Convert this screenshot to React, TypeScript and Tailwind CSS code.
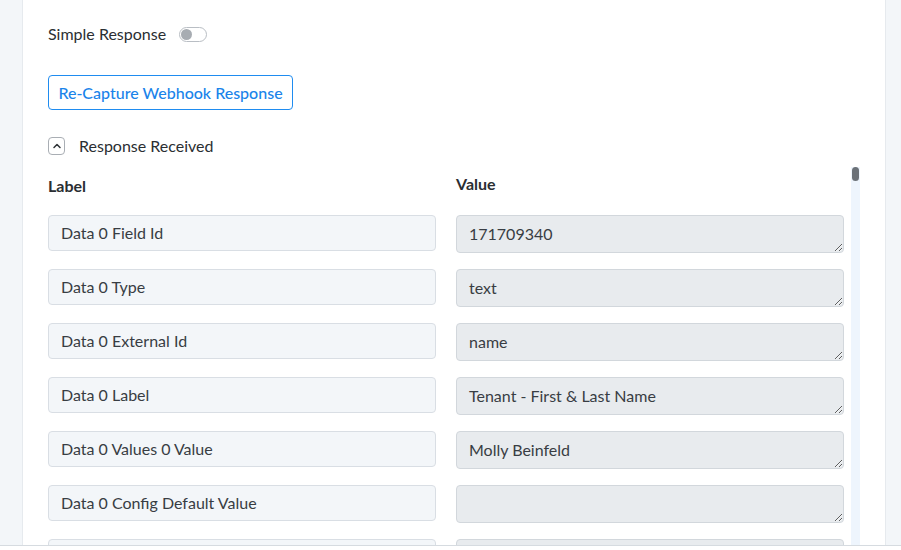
import { ChevronUp } from "lucide-react";

type Row = { label: string; value: string };

const rows: Row[] = [
  { label: "Data 0 Field Id", value: "171709340" },
  { label: "Data 0 Type", value: "text" },
  { label: "Data 0 External Id", value: "name" },
  { label: "Data 0 Label", value: "Tenant - First & Last Name" },
  { label: "Data 0 Values 0 Value", value: "Molly Beinfeld" },
  { label: "Data 0 Config Default Value", value: "" },
  { label: "Data 0 Config Placeholder", value: "" },
];

const ResponseRow = ({ row }: { row: Row }) => (
  <>
    <div
      className="
        h-[36px]
        px-[12px]
        flex
        items-center
        rounded-[4px]
        border
        border-[#d9dee4]
        bg-[#f3f6f9]
        text-[16px]
        text-[#383d43]
        whitespace-nowrap
      "
    >
      {row.label}
    </div>
    <textarea
      readOnly
      defaultValue={row.value}
      className="
        h-[38px]
        min-h-[38px]
        px-[12px]
        pt-[6px]
        block
        w-full
        resize-y
        overflow-hidden
        rounded-[4px]
        border
        border-[#d2d7dc]
        bg-[#e8ebee]
        text-[16px]
        leading-[24px]
        text-[#383d43]
        outline-none
      "
    />
  </>
);

export default function App() {
  return (
    <div
      className="h-[550px] bg-white overflow-hidden"
      style={{ fontFamily: "Lato, 'Open Sans', sans-serif" }}
    >
      <div className="h-[546px] overflow-hidden bg-[#f3f6f9] border-b border-[#d6dbe0] flex">
        <div className="ml-[22px] w-[864px] h-full bg-white border-x border-[#e6eaee] pl-[25px] pr-[25px] flex flex-col">
          {/* simple response switch */}
          <div className="mt-[22px] flex items-center gap-[13px]">
            <span className="text-[16px] text-[#2a2e32]">Simple Response</span>
            <span className="w-[28px] h-[15px] rounded-full border border-[#b9bec4] bg-white flex items-center px-[1px]">
              <span className="w-[11px] h-[11px] rounded-full bg-[#a7acb2]" />
            </span>
          </div>

          <button
            className="
              mt-[29px]
              w-[245px]
              h-[35px]
              rounded-[4px]
              border
              border-[#1f8cf0]
              text-[16px]
              text-[#1a84ea]
              font-medium
              bg-white
            "
          >
            Re-Capture Webhook Response
          </button>

          <div className="mt-[24px] flex items-center gap-[14px]">
            <span className="w-[17px] h-[18px] rounded-[4px] border border-[#a9aeb4] flex items-center justify-center">
              <ChevronUp size={12} strokeWidth={3} className="text-[#2f3337]" />
            </span>
            <span className="text-[16px] text-[#2a2e32]">Response Received</span>
          </div>

          {/* captured fields */}
          <div className="mt-[9px] flex-1 flex gap-[7px] min-h-0">
            <div className="w-[796px]">
              <div className="grid grid-cols-2 gap-x-[20px] mt-[5px] h-[20px] items-end">
                <span className="text-[16px] font-bold text-[#2a2e32] translate-y-[2px]">Label</span>
                <span className="text-[16px] font-bold text-[#2a2e32]">Value</span>
              </div>
              <div className="grid grid-cols-2 gap-x-[20px] gap-y-[16px] mt-[23px]">
                {rows.map((row) => (
                  <ResponseRow key={row.label} row={row} />
                ))}
              </div>
            </div>
            <div className="w-[9px] bg-[#eef5fd] flex justify-center">
              <span className="w-[7px] h-[14px] rounded-full bg-[#6b7178]" />
            </div>
          </div>
        </div>
      </div>
    </div>
  );
}
